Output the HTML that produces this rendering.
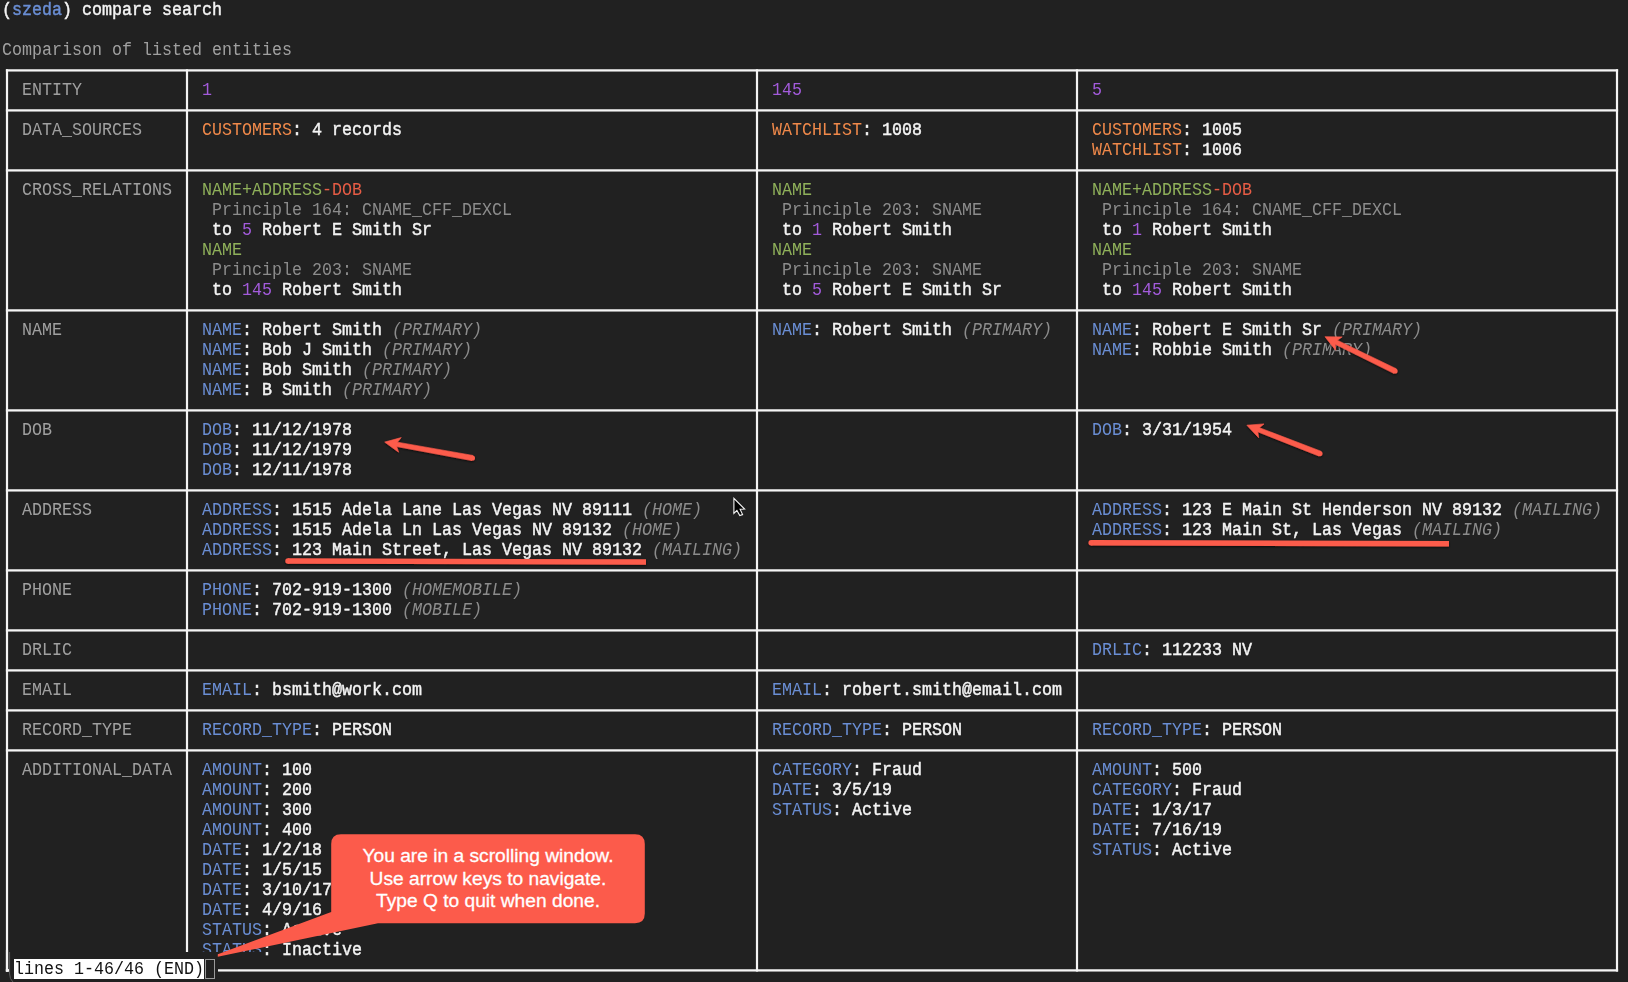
<!DOCTYPE html>
<html><head><meta charset="utf-8"><style>
*{margin:0;padding:0;box-sizing:border-box}
html,body{width:1628px;height:982px;overflow:hidden;background:#212121}
body{position:relative;font-family:"Liberation Mono",monospace;font-size:18px;line-height:20px}
.ln{position:absolute;white-space:pre;height:20px;transform:scaleX(0.925926);transform-origin:0 0}
.bd{position:absolute;background:#f4f4f4}
.w{color:#f4f4f4;-webkit-text-stroke:0.45px #f4f4f4}
.lbl{color:#a0a0a0}
.b{color:#6a8ed4}
.bb{color:#6a8ed4;-webkit-text-stroke:0.45px #6a8ed4}
.o{color:#f0894a}
.g{color:#8fb05a}
.r{color:#e65c45}
.p{color:#a35bdb}
.gr{color:#8c8c8c}
.it{color:#8c8c8c;font-style:italic}
</style></head><body>
<svg width="1628" height="982" style="position:absolute;left:0;top:0" fill="#f4f4f4"><rect x="5.90" y="69.25" width="1612.20" height="2.30"/><rect x="5.90" y="109.25" width="1612.20" height="2.30"/><rect x="5.90" y="169.25" width="1612.20" height="2.30"/><rect x="5.90" y="309.25" width="1612.20" height="2.30"/><rect x="5.90" y="409.25" width="1612.20" height="2.30"/><rect x="5.90" y="489.25" width="1612.20" height="2.30"/><rect x="5.90" y="569.25" width="1612.20" height="2.30"/><rect x="5.90" y="629.25" width="1612.20" height="2.30"/><rect x="5.90" y="669.25" width="1612.20" height="2.30"/><rect x="5.90" y="709.25" width="1612.20" height="2.30"/><rect x="5.90" y="749.25" width="1612.20" height="2.30"/><rect x="5.90" y="969.25" width="1612.20" height="2.30"/><rect x="5.90" y="69.25" width="2.20" height="902.30"/><rect x="185.90" y="69.25" width="2.20" height="902.30"/><rect x="755.90" y="69.25" width="2.20" height="902.30"/><rect x="1075.90" y="69.25" width="2.20" height="902.30"/><rect x="1615.90" y="69.25" width="2.20" height="902.30"/></svg>
<div class="ln" style="top:0px;left:2px"><span class="w">(</span><span class="bb">szeda</span><span class="w">)</span><span class="w"> compare search</span></div>
<div class="ln" style="top:40px;left:2px"><span class="lbl">Comparison of listed entities</span></div>
<div class="ln" style="top:80px;left:22px"><span class="lbl">ENTITY</span></div>
<div class="ln" style="top:80px;left:202px"><span class="p">1</span></div>
<div class="ln" style="top:80px;left:772px"><span class="p">145</span></div>
<div class="ln" style="top:80px;left:1092px"><span class="p">5</span></div>
<div class="ln" style="top:120px;left:22px"><span class="lbl">DATA_SOURCES</span></div>
<div class="ln" style="top:120px;left:202px"><span class="o">CUSTOMERS</span><span class="w">: 4 records</span></div>
<div class="ln" style="top:120px;left:772px"><span class="o">WATCHLIST</span><span class="w">: 1008</span></div>
<div class="ln" style="top:120px;left:1092px"><span class="o">CUSTOMERS</span><span class="w">: 1005</span></div>
<div class="ln" style="top:140px;left:1092px"><span class="o">WATCHLIST</span><span class="w">: 1006</span></div>
<div class="ln" style="top:180px;left:22px"><span class="lbl">CROSS_RELATIONS</span></div>
<div class="ln" style="top:180px;left:202px"><span class="g">NAME+ADDRESS</span><span class="r">-DOB</span></div>
<div class="ln" style="top:200px;left:202px"><span class="gr"> Principle 164: CNAME_CFF_DEXCL</span></div>
<div class="ln" style="top:220px;left:202px"><span class="w"> to </span><span class="p">5</span><span class="w"> Robert E Smith Sr</span></div>
<div class="ln" style="top:240px;left:202px"><span class="g">NAME</span></div>
<div class="ln" style="top:260px;left:202px"><span class="gr"> Principle 203: SNAME</span></div>
<div class="ln" style="top:280px;left:202px"><span class="w"> to </span><span class="p">145</span><span class="w"> Robert Smith</span></div>
<div class="ln" style="top:180px;left:772px"><span class="g">NAME</span></div>
<div class="ln" style="top:200px;left:772px"><span class="gr"> Principle 203: SNAME</span></div>
<div class="ln" style="top:220px;left:772px"><span class="w"> to </span><span class="p">1</span><span class="w"> Robert Smith</span></div>
<div class="ln" style="top:240px;left:772px"><span class="g">NAME</span></div>
<div class="ln" style="top:260px;left:772px"><span class="gr"> Principle 203: SNAME</span></div>
<div class="ln" style="top:280px;left:772px"><span class="w"> to </span><span class="p">5</span><span class="w"> Robert E Smith Sr</span></div>
<div class="ln" style="top:180px;left:1092px"><span class="g">NAME+ADDRESS</span><span class="r">-DOB</span></div>
<div class="ln" style="top:200px;left:1092px"><span class="gr"> Principle 164: CNAME_CFF_DEXCL</span></div>
<div class="ln" style="top:220px;left:1092px"><span class="w"> to </span><span class="p">1</span><span class="w"> Robert Smith</span></div>
<div class="ln" style="top:240px;left:1092px"><span class="g">NAME</span></div>
<div class="ln" style="top:260px;left:1092px"><span class="gr"> Principle 203: SNAME</span></div>
<div class="ln" style="top:280px;left:1092px"><span class="w"> to </span><span class="p">145</span><span class="w"> Robert Smith</span></div>
<div class="ln" style="top:320px;left:22px"><span class="lbl">NAME</span></div>
<div class="ln" style="top:320px;left:202px"><span class="b">NAME</span><span class="w">: Robert Smith</span><span class="it"> (PRIMARY)</span></div>
<div class="ln" style="top:340px;left:202px"><span class="b">NAME</span><span class="w">: Bob J Smith</span><span class="it"> (PRIMARY)</span></div>
<div class="ln" style="top:360px;left:202px"><span class="b">NAME</span><span class="w">: Bob Smith</span><span class="it"> (PRIMARY)</span></div>
<div class="ln" style="top:380px;left:202px"><span class="b">NAME</span><span class="w">: B Smith</span><span class="it"> (PRIMARY)</span></div>
<div class="ln" style="top:320px;left:772px"><span class="b">NAME</span><span class="w">: Robert Smith</span><span class="it"> (PRIMARY)</span></div>
<div class="ln" style="top:320px;left:1092px"><span class="b">NAME</span><span class="w">: Robert E Smith Sr</span><span class="it"> (PRIMARY)</span></div>
<div class="ln" style="top:340px;left:1092px"><span class="b">NAME</span><span class="w">: Robbie Smith</span><span class="it"> (PRIMARY)</span></div>
<div class="ln" style="top:420px;left:22px"><span class="lbl">DOB</span></div>
<div class="ln" style="top:420px;left:202px"><span class="b">DOB</span><span class="w">: 11/12/1978</span></div>
<div class="ln" style="top:440px;left:202px"><span class="b">DOB</span><span class="w">: 11/12/1979</span></div>
<div class="ln" style="top:460px;left:202px"><span class="b">DOB</span><span class="w">: 12/11/1978</span></div>
<div class="ln" style="top:420px;left:1092px"><span class="b">DOB</span><span class="w">: 3/31/1954</span></div>
<div class="ln" style="top:500px;left:22px"><span class="lbl">ADDRESS</span></div>
<div class="ln" style="top:500px;left:202px"><span class="b">ADDRESS</span><span class="w">: 1515 Adela Lane Las Vegas NV 89111</span><span class="it"> (HOME)</span></div>
<div class="ln" style="top:520px;left:202px"><span class="b">ADDRESS</span><span class="w">: 1515 Adela Ln Las Vegas NV 89132</span><span class="it"> (HOME)</span></div>
<div class="ln" style="top:540px;left:202px"><span class="b">ADDRESS</span><span class="w">: 123 Main Street, Las Vegas NV 89132</span><span class="it"> (MAILING)</span></div>
<div class="ln" style="top:500px;left:1092px"><span class="b">ADDRESS</span><span class="w">: 123 E Main St Henderson NV 89132</span><span class="it"> (MAILING)</span></div>
<div class="ln" style="top:520px;left:1092px"><span class="b">ADDRESS</span><span class="w">: 123 Main St, Las Vegas</span><span class="it"> (MAILING)</span></div>
<div class="ln" style="top:580px;left:22px"><span class="lbl">PHONE</span></div>
<div class="ln" style="top:580px;left:202px"><span class="b">PHONE</span><span class="w">: 702-919-1300</span><span class="it"> (HOMEMOBILE)</span></div>
<div class="ln" style="top:600px;left:202px"><span class="b">PHONE</span><span class="w">: 702-919-1300</span><span class="it"> (MOBILE)</span></div>
<div class="ln" style="top:640px;left:22px"><span class="lbl">DRLIC</span></div>
<div class="ln" style="top:640px;left:1092px"><span class="b">DRLIC</span><span class="w">: 112233 NV</span></div>
<div class="ln" style="top:680px;left:22px"><span class="lbl">EMAIL</span></div>
<div class="ln" style="top:680px;left:202px"><span class="b">EMAIL</span><span class="w">: bsmith@work.com</span></div>
<div class="ln" style="top:680px;left:772px"><span class="b">EMAIL</span><span class="w">: robert.smith@email.com</span></div>
<div class="ln" style="top:720px;left:22px"><span class="lbl">RECORD_TYPE</span></div>
<div class="ln" style="top:720px;left:202px"><span class="b">RECORD_TYPE</span><span class="w">: PERSON</span></div>
<div class="ln" style="top:720px;left:772px"><span class="b">RECORD_TYPE</span><span class="w">: PERSON</span></div>
<div class="ln" style="top:720px;left:1092px"><span class="b">RECORD_TYPE</span><span class="w">: PERSON</span></div>
<div class="ln" style="top:760px;left:22px"><span class="lbl">ADDITIONAL_DATA</span></div>
<div class="ln" style="top:760px;left:202px"><span class="b">AMOUNT</span><span class="w">: 100</span></div>
<div class="ln" style="top:780px;left:202px"><span class="b">AMOUNT</span><span class="w">: 200</span></div>
<div class="ln" style="top:800px;left:202px"><span class="b">AMOUNT</span><span class="w">: 300</span></div>
<div class="ln" style="top:820px;left:202px"><span class="b">AMOUNT</span><span class="w">: 400</span></div>
<div class="ln" style="top:840px;left:202px"><span class="b">DATE</span><span class="w">: 1/2/18</span></div>
<div class="ln" style="top:860px;left:202px"><span class="b">DATE</span><span class="w">: 1/5/15</span></div>
<div class="ln" style="top:880px;left:202px"><span class="b">DATE</span><span class="w">: 3/10/17</span></div>
<div class="ln" style="top:900px;left:202px"><span class="b">DATE</span><span class="w">: 4/9/16</span></div>
<div class="ln" style="top:920px;left:202px"><span class="b">STATUS</span><span class="w">: Active</span></div>
<div class="ln" style="top:940px;left:202px"><span class="b">STATUS</span><span class="w">: Inactive</span></div>
<div class="ln" style="top:760px;left:772px"><span class="b">CATEGORY</span><span class="w">: Fraud</span></div>
<div class="ln" style="top:780px;left:772px"><span class="b">DATE</span><span class="w">: 3/5/19</span></div>
<div class="ln" style="top:800px;left:772px"><span class="b">STATUS</span><span class="w">: Active</span></div>
<div class="ln" style="top:760px;left:1092px"><span class="b">AMOUNT</span><span class="w">: 500</span></div>
<div class="ln" style="top:780px;left:1092px"><span class="b">CATEGORY</span><span class="w">: Fraud</span></div>
<div class="ln" style="top:800px;left:1092px"><span class="b">DATE</span><span class="w">: 1/3/17</span></div>
<div class="ln" style="top:820px;left:1092px"><span class="b">DATE</span><span class="w">: 7/16/19</span></div>
<div class="ln" style="top:840px;left:1092px"><span class="b">STATUS</span><span class="w">: Active</span></div>
<div style="position:absolute;left:9px;top:952px;width:253px;height:30px;background:#212121"></div>
<svg width="1628" height="982" style="position:absolute;left:0;top:0" fill="#f4f4f4"><rect x="218" y="969.25" width="44" height="2.3"/><rect x="5.9" y="950" width="2.2" height="21.55"/><rect x="5.9" y="969.25" width="3.1" height="2.3"/><path d="M9.6,952 L9.6,974 Q9.6,979 13,982" stroke="#5a5a5a" stroke-width="1" fill="none"/></svg>
<svg width="1628" height="982" style="position:absolute;left:0;top:0">
<defs><filter id="sh" x="-20%" y="-20%" width="140%" height="140%"><feDropShadow dx="0" dy="1" stdDeviation="1.2" flood-color="#000" flood-opacity="0.7"/></filter></defs>
<g filter="url(#sh)"><path d="M384.70,442.10 L401.27,437.58 L397.39,442.17 L472.86,455.44 L471.94,460.56 L396.61,446.49 L398.63,452.15 Z" fill="#fc5b4b" stroke="#fc5b4b" stroke-width="0.6" stroke-linejoin="round"/><circle cx="472.40" cy="458.00" r="2.60" fill="#fc5b4b"/>
<path d="M1246.90,425.20 L1264.03,423.92 L1259.35,427.68 L1320.84,451.18 L1318.96,456.02 L1257.75,431.78 L1258.66,437.72 Z" fill="#fc5b4b" stroke="#fc5b4b" stroke-width="0.6" stroke-linejoin="round"/><circle cx="1319.90" cy="453.60" r="2.60" fill="#fc5b4b"/>
<path d="M1325.00,336.70 L1342.17,336.88 L1337.19,340.22 L1396.14,368.67 L1393.86,373.33 L1335.26,344.18 L1335.66,350.17 Z" fill="#fc5b4b" stroke="#fc5b4b" stroke-width="0.6" stroke-linejoin="round"/><circle cx="1395.00" cy="371.00" r="2.60" fill="#fc5b4b"/>
<line x1="288.0" y1="561.0" x2="646.0" y2="562.0" stroke="#fc5b4b" stroke-width="5.4"/><circle cx="288.0" cy="561.0" r="2.7" fill="#fc5b4b"/>
<line x1="1091.2" y1="542.8" x2="1449.0" y2="543.7" stroke="#fc5b4b" stroke-width="5.4"/><circle cx="1091.2" cy="542.8" r="2.7" fill="#fc5b4b"/></g>
<path d="M341,834.2 L635,834.2 Q644.8,834.2 644.8,844 L644.8,913.5 Q644.8,923.2 635,923.2 L378,923.2 L217.8,956.8 L217.8,954.3 L331.2,912 L331.2,844 Q331.2,834.2 341,834.2 Z" fill="#fc5b4b"/>
<path d="M733.9,498.4 L733.9,513.4 L736.9,510.4 L739.8,515.6 L742.6,514.6 L740.1,509.3 L744.6,509.1 Z" fill="#000" stroke="#f4f4f4" stroke-width="1.1" stroke-linejoin="miter"/>
</svg>
<div style="position:absolute;left:331px;top:845px;width:314px;font-family:'Liberation Sans',sans-serif;font-size:19.2px;line-height:22.5px;color:#fff;text-align:center;-webkit-text-stroke:0.3px #fff">You are in a scrolling window.<br>Use arrow keys to navigate.<br>Type Q to quit when done.</div>
<div style="position:absolute;left:14px;top:959px;width:190px;height:20px;background:#fff"></div>
<div class="ln" style="top:959px;left:13.5px;color:#111;">lines 1-46/46 (END)</div>
<div style="position:absolute;left:205px;top:959px;width:10px;height:20px;background:#212121;border:1.5px solid #9a9a9a"></div>

</body></html>
